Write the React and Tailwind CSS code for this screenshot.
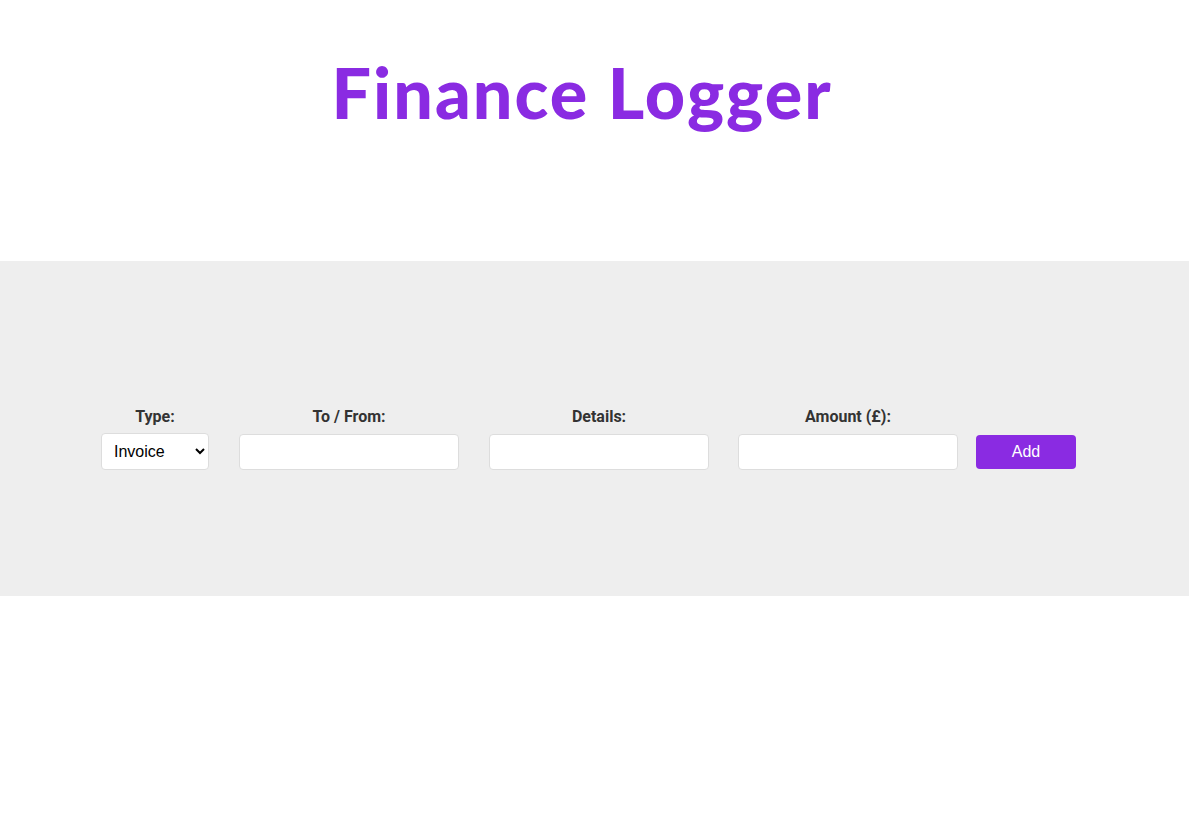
export default function App() {
  return (
    <div className="min-h-screen bg-white" style={{ fontFamily: 'Roboto, sans-serif' }}>
      <header className="h-[261px] pt-[49px] pr-[25px] flex justify-center">
        <h1 className="text-[#8a2be2] text-[70px] font-black leading-[86px] tracking-[2px]" style={{ fontFamily: 'Lato, sans-serif' }}>
          Finance Logger
        </h1>
      </header>

      <form className="h-[335px] bg-[#eeeeee] flex items-start pt-[146px] pl-[101px]">
        <div className="flex flex-col items-center w-[108px]">
          <label className="text-[16px] font-bold text-[#333] leading-[19px] mb-[7px]">Type:</label>
          <select className="w-[108px] h-[37px] bg-white border border-[#ddd] rounded-[4px] pl-[8px] text-[16px] text-black" style={{ fontFamily: '"Liberation Sans", Arial, sans-serif' }}>
            <option>Invoice</option>
            <option>Payment</option>
          </select>
        </div>
        <div className="flex flex-col items-center w-[220px] ml-[30px]">
          <label className="text-[16px] font-bold text-[#333] leading-[19px] mb-[8px]">To / From:</label>
          <input type="text" className="w-[220px] h-[36px] bg-white border border-[#ddd] rounded-[4px] px-2" />
        </div>
        <div className="flex flex-col items-center w-[220px] ml-[30px]">
          <label className="text-[16px] font-bold text-[#333] leading-[19px] mb-[8px]">Details:</label>
          <input type="text" className="w-[220px] h-[36px] bg-white border border-[#ddd] rounded-[4px] px-2" />
        </div>
        <div className="flex flex-col items-center w-[220px] ml-[29px]">
          <label className="text-[16px] font-bold text-[#333] leading-[19px] mb-[8px]">Amount (£):</label>
          <input type="number" className="w-[220px] h-[36px] bg-white border border-[#ddd] rounded-[4px] px-2" />
        </div>
        <button type="button" className="ml-[18px] mt-[28px] w-[100px] h-[34px] bg-[#8a2be2] text-white text-[16px] rounded-[4px]" style={{ fontFamily: '"Liberation Sans", Arial, sans-serif' }}>
          Add
        </button>
      </form>
    </div>
  );
}
